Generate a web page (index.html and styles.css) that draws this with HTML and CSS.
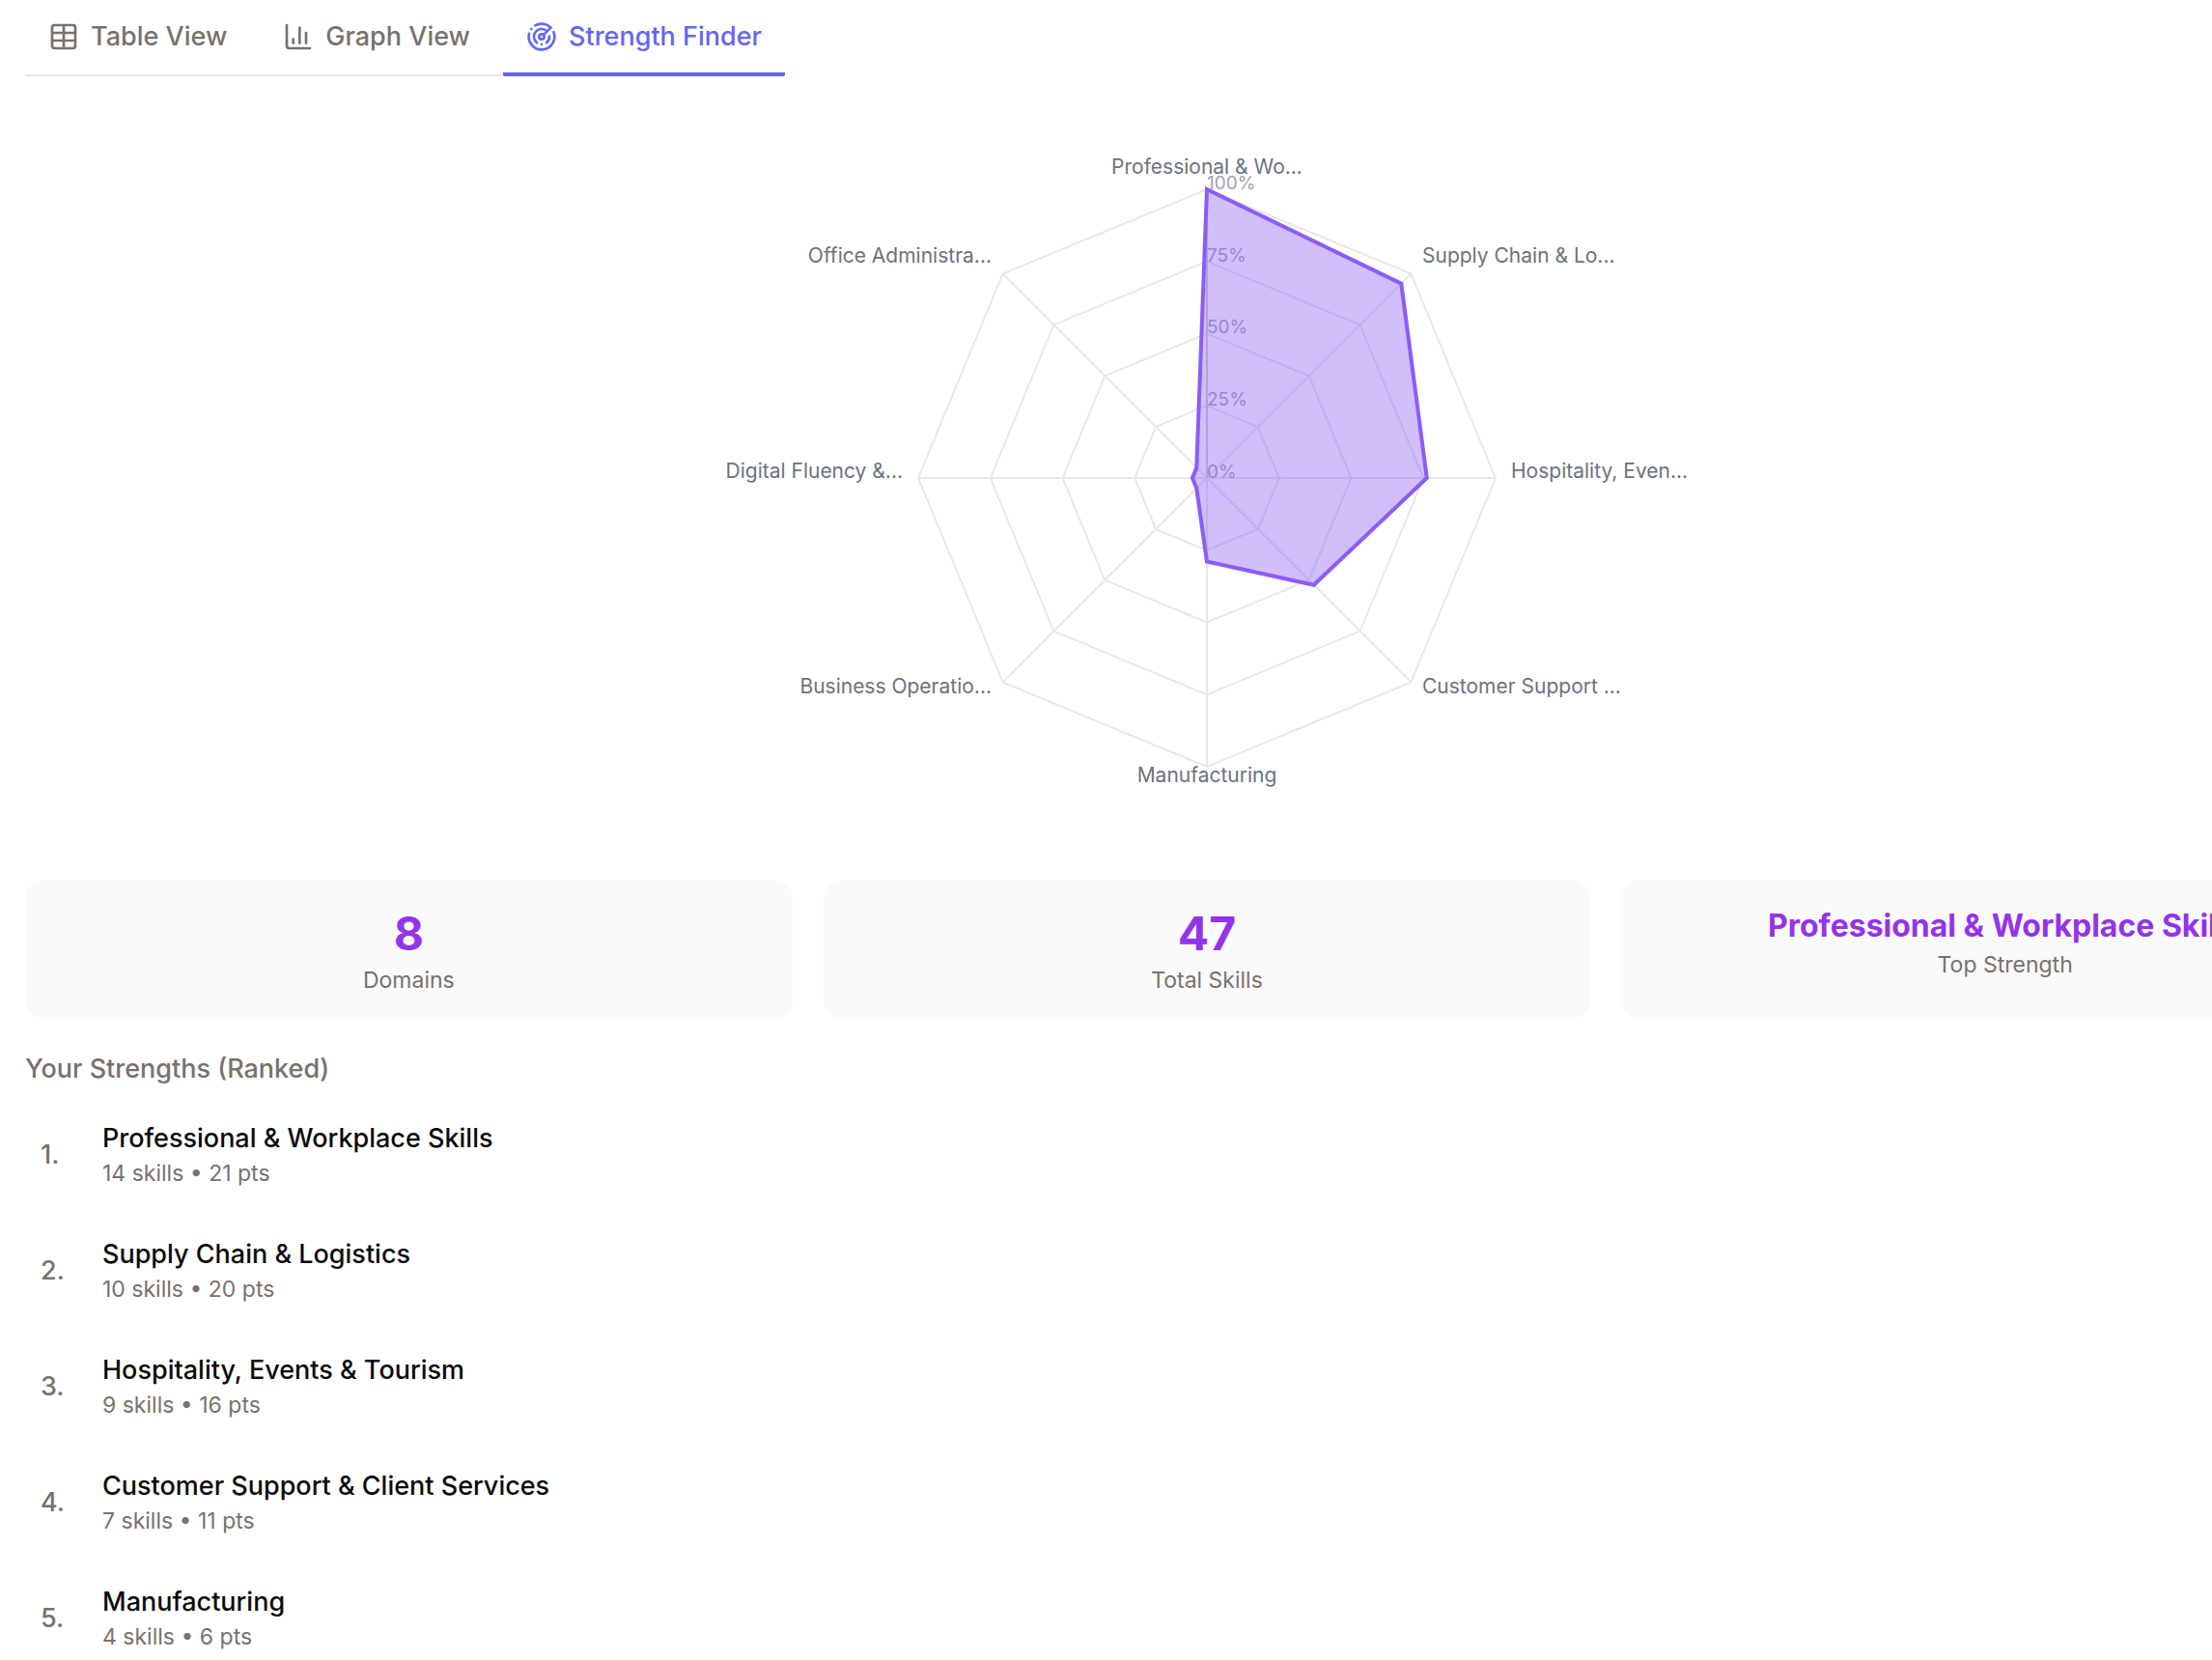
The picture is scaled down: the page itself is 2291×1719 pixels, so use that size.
FILE: index.html
```html
<!DOCTYPE html>
<html lang="en">
<head>
  <meta charset="UTF-8">
  <meta name="viewport" content="width=device-width, initial-scale=1.0">
  <title>Strength Finder</title>
  <link rel="stylesheet" href="styles.css">
</head>
<body>
  <main class="page">

    <nav class="tabs" role="tablist">
      <button class="tab" type="button" role="tab" aria-selected="false">
        <svg class="icon" viewBox="0 0 24 24" aria-hidden="true">
          <path d="M12 3v18"/>
          <rect width="18" height="18" x="3" y="3" rx="2"/>
          <path d="M3 9h18"/>
          <path d="M3 15h18"/>
        </svg>
        Table View
      </button>
      <button class="tab" type="button" role="tab" aria-selected="false">
        <svg class="icon" viewBox="0 0 24 24" aria-hidden="true">
          <path d="M3 3v16a2 2 0 0 0 2 2h16"/>
          <path d="M18 17V9"/>
          <path d="M13 17V5"/>
          <path d="M8 17v-3"/>
        </svg>
        Graph View
      </button>
      <button class="tab active" type="button" role="tab" aria-selected="true">
        <svg class="icon" viewBox="0 0 24 24" aria-hidden="true">
          <path d="M19.07 4.93A10 10 0 0 0 6.99 3.34"/>
          <path d="M4 6h.01"/>
          <path d="M2.29 9.62A10 10 0 1 0 21.31 8.35"/>
          <path d="M16.24 7.76A6 6 0 1 0 8.23 16.67"/>
          <path d="M12 18h.01"/>
          <path d="M17.99 11.66A6 6 0 0 1 15.77 16.67"/>
          <circle cx="12" cy="12" r="2"/>
          <path d="m13.41 10.59 5.66-5.66"/>
        </svg>
        Strength Finder
      </button>
    </nav>

    <!-- Radar chart, 0,0 is the center and 299 is 100% -->
    <section class="chart">
      <svg class="radar" viewBox="-600 -400 1200 800" role="img" aria-label="Strengths by domain">
        <g class="grid">
          <path d="M0 0V-299M0 0L211.4 -211.4M0 0H299M0 0L211.4 211.4M0 0V299M0 0L-211.4 211.4M0 0H-299M0 0L-211.4 -211.4"/>
          <polygon points="0,-74.8 52.9,-52.9 74.8,0 52.9,52.9 0,74.8 -52.9,52.9 -74.8,0 -52.9,-52.9"/>
          <polygon points="0,-149.5 105.7,-105.7 149.5,0 105.7,105.7 0,149.5 -105.7,105.7 -149.5,0 -105.7,-105.7"/>
          <polygon points="0,-224.3 158.6,-158.6 224.3,0 158.6,158.6 0,224.3 -158.6,158.6 -224.3,0 -158.6,-158.6"/>
          <polygon points="0,-299 211.4,-211.4 299,0 211.4,211.4 0,299 -211.4,211.4 -299,0 -211.4,-211.4"/>
        </g>
        <g class="labels">
          <text x="0" y="-315" text-anchor="middle">Professional &amp; Wo...</text>
          <text x="223" y="-223">Supply Chain &amp; Lo...</text>
          <text x="315" y="0">Hospitality, Even...</text>
          <text x="223" y="223">Customer Support ...</text>
          <text x="0" y="315" text-anchor="middle">Manufacturing</text>
          <text x="-223" y="223" text-anchor="end">Business Operatio...</text>
          <text x="-315" y="0" text-anchor="end">Digital Fluency &amp;...</text>
          <text x="-223" y="-223" text-anchor="end">Office Administra...</text>
        </g>
        <path class="axis" d="M0 0V-299"/>
        <g class="ticks">
          <text x="0" y="0">0%</text>
          <text x="0" y="-75">25%</text>
          <text x="0" y="-150">50%</text>
          <text x="0" y="-224">75%</text>
          <text x="0" y="-299">100%</text>
        </g>
        <polygon class="area" points="0,-299 201.3,-201.3 227.8,0 110.7,110.7 0,86.5 -10.7,10.7 -15,0 -10.7,-10.7"/>
      </svg>
    </section>

    <section class="stats">
      <div class="stat-card">
        <div class="stat-number">8</div>
        <div class="stat-label">Domains</div>
      </div>
      <div class="stat-card">
        <div class="stat-number">47</div>
        <div class="stat-label">Total Skills</div>
      </div>
      <div class="stat-card">
        <div class="stat-name">Professional &amp; Workplace Skills</div>
        <div class="stat-label">Top Strength</div>
      </div>
    </section>

    <section class="ranking">
      <h3>Your Strengths (Ranked)</h3>
      <ol class="rank-list">
        <li class="rank-item">
          <span class="rank">1.</span>
          <div>
            <div class="rank-title">Professional &amp; Workplace Skills</div>
            <div class="rank-info">14 skills • 21 pts</div>
          </div>
        </li>
        <li class="rank-item">
          <span class="rank">2.</span>
          <div>
            <div class="rank-title">Supply Chain &amp; Logistics</div>
            <div class="rank-info">10 skills • 20 pts</div>
          </div>
        </li>
        <li class="rank-item">
          <span class="rank">3.</span>
          <div>
            <div class="rank-title">Hospitality, Events &amp; Tourism</div>
            <div class="rank-info">9 skills • 16 pts</div>
          </div>
        </li>
        <li class="rank-item">
          <span class="rank">4.</span>
          <div>
            <div class="rank-title">Customer Support &amp; Client Services</div>
            <div class="rank-info">7 skills • 11 pts</div>
          </div>
        </li>
        <li class="rank-item">
          <span class="rank">5.</span>
          <div>
            <div class="rank-title">Manufacturing</div>
            <div class="rank-info">4 skills • 6 pts</div>
          </div>
        </li>
      </ol>
    </section>

  </main>
</body>
</html>
```

FILE: styles.css
```css
*{margin: 0; padding: 0; box-sizing: border-box;}

body{
  background-color: #fff;
  color: #0c0a09;
  font-family: Inter, "Liberation Sans", sans-serif;
  overflow-x: hidden;
}

/* the panel is wider than the window and runs off the right side */
.page{
  margin-left: 26px;
  margin-right: -183px;
}

.tabs{
  display: inline-flex;
  vertical-align: top;
  gap: 10px;
  border-bottom: 2px solid #e5e5e5;
}
.tab{
  display: flex;
  align-items: center;
  gap: 12px;
  margin-bottom: -2px;
  padding: 18px 24px 17px;
  border: none;
  border-bottom: 4px solid transparent;
  border-radius: 2px;
  background: none;
  color: #78716c;
  font-family: inherit;
  font-size: 27px;
  font-weight: 500;
  line-height: 40px;
  cursor: pointer;
}
.tab.active{
  color: #6366f1;
  border-bottom-color: #6366f1;
}
.icon{
  width: 32px;
  height: 32px;
  fill: none;
  stroke: currentColor;
  stroke-width: 2;
  stroke-linecap: round;
  stroke-linejoin: round;
}

.chart{
  padding: 16px 0;
}
.radar{
  display: block;
  width: 100%;
  height: 800px;
}
.grid{
  fill: none;
  stroke: #e5e7eb;
  stroke-width: 2;
}
.axis{
  stroke: #ccc;
  stroke-width: 2;
}
.labels{
  fill: #6b7280;
  font-size: 21px;
}
.ticks{
  fill: #9ca3af;
  font-size: 19px;
}
.area{
  fill: #8b5cf6;
  fill-opacity: 0.4;
  stroke: #8b5cf6;
  stroke-width: 4;
}

.stats{
  display: grid;
  grid-template-columns: repeat(3, 1fr);
  gap: 32px;
}
.stat-card{
  padding: 24px;
  border-radius: 20px;
  background-color: #fafafa;
  text-align: center;
}
.stat-number, .stat-name{
  color: #9333ea;
  font-weight: 700;
}
.stat-number{
  font-size: 48px;
  line-height: 64px;
}
.stat-name{
  font-size: 32px;
  line-height: 48px;
}
.stat-label{
  color: #78716c;
  font-size: 23px;
  line-height: 32px;
}

.ranking{
  margin-top: 32px;
}
.ranking h3{
  margin-bottom: 16px;
  color: #78716c;
  font-size: 27px;
  font-weight: 500;
  line-height: 40px;
}
.rank-list{
  display: flex;
  flex-direction: column;
  gap: 16px;
  list-style: none;
}
.rank-item{
  display: flex;
  align-items: center;
  gap: 16px;
  padding: 16px;
}
.rank{
  width: 48px;
  color: #78716c;
  font-size: 27px;
  font-weight: 500;
}
.rank-title{
  font-size: 27px;
  font-weight: 500;
  line-height: 40px;
}
.rank-info{
  color: #78716c;
  font-size: 23px;
  line-height: 32px;
}
```
